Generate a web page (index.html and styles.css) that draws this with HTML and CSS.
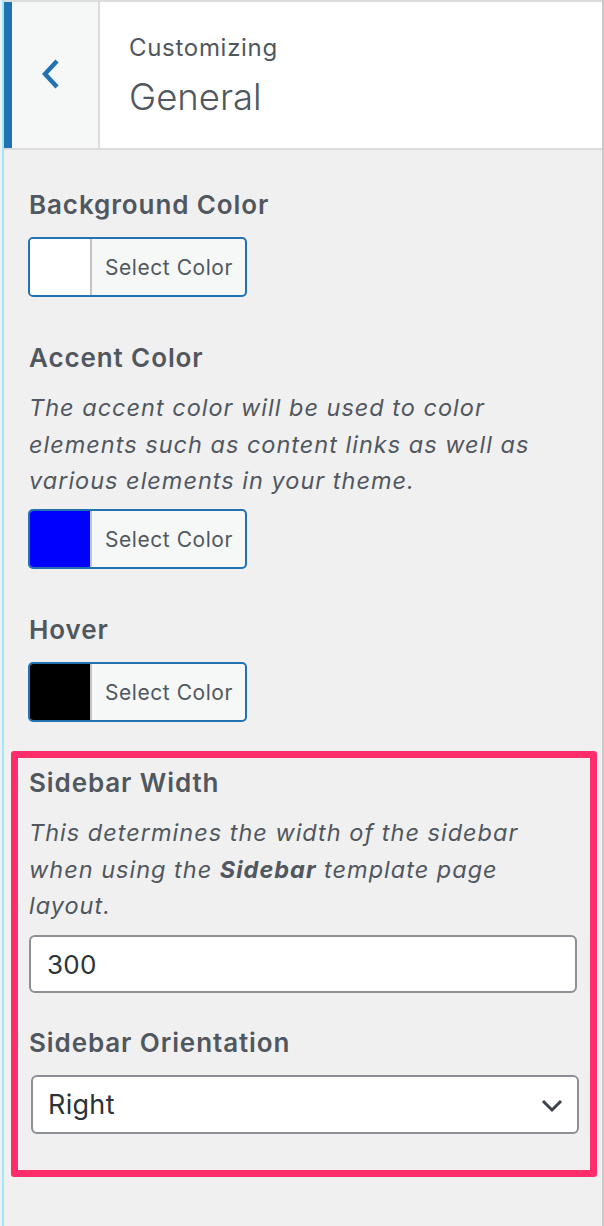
FILE: index.html
```html
<!DOCTYPE html>
<html lang="en">
<head>
<meta charset="utf-8">
<title>Customizing General</title>
<link rel="stylesheet" href="styles.css">
</head>
<body>
<div class="panel">
  <header class="section-header">
    <div class="accent-bar"></div>
    <button class="back-btn" aria-label="Back">
      <svg class="back-icon" width="20" height="32" viewBox="0 0 20 32"><polyline points="15,3 3,16 15,29" fill="none" stroke="#2271b1" stroke-width="4.4"/></svg>
    </button>
    <div class="section-title">
      <span class="crumb">Customizing</span>
      <h3 class="title">General</h3>
    </div>
  </header>

  <div class="controls">
    <div class="control">
      <span class="control-title">Background Color</span>
      <div class="color-btn"><span class="swatch swatch-white"></span><span class="color-label">Select Color</span></div>
    </div>

    <div class="control">
      <span class="control-title">Accent Color</span>
      <p class="desc">The accent color will be used to color elements such as content links as well as various elements in your theme.</p>
      <div class="color-btn"><span class="swatch swatch-blue"></span><span class="color-label">Select Color</span></div>
    </div>

    <div class="control">
      <span class="control-title">Hover</span>
      <div class="color-btn"><span class="swatch swatch-black"></span><span class="color-label">Select Color</span></div>
    </div>

    <div class="highlight">
      <div class="control">
        <span class="control-title">Sidebar Width</span>
        <p class="desc desc-tight">This determines the width of the sidebar when using the <b>Sidebar</b> template page layout.</p>
        <div class="text-input">300</div>
      </div>
      <div class="control control-orient">
        <span class="control-title">Sidebar Orientation</span>
        <div class="select">
          <span>Right</span>
          <svg class="select-icon" width="22" height="14" viewBox="0 0 22 14"><polyline points="2,2 11,11 20,2" fill="none" stroke="#3c434a" stroke-width="3"/></svg>
        </div>
      </div>
    </div>
  </div>
</div>
</body>
</html>
```

FILE: styles.css
```css
html, body {
  margin: 0;
  height: 100%;
}
body {
  background: #f0f0f1;
  padding-left: 2px;
  box-sizing: border-box;
  font-family: Inter, "Noto Sans", sans-serif;
  color: #50575e;
}
.panel {
  min-height: 100%;
  box-sizing: border-box;
  border-left: 2px solid #9ee9fa;
  border-right: 2px solid #c9c9cb;
  background: #f0f0f1;
}
.section-header {
  display: flex;
  height: 150px;
  box-sizing: border-box;
  border-top: 2px solid #dcdcde;
  border-bottom: 2px solid #dcdcde;
  background: #fff;
}
.accent-bar {
  width: 8px;
  background: #2271b1;
}
.back-btn {
  width: 88px;
  box-sizing: border-box;
  border: 0;
  border-right: 2px solid #dcdcde;
  background: #f6f7f7;
  padding: 0 0 0 30px;
  margin: 0;
  display: flex;
  align-items: center;
}
.back-icon {
  display: block;
  margin-top: -2px;
}
.section-title {
  padding: 30px 0 0 29px;
  display: flex;
  flex-direction: column;
}
.crumb {
  font-size: 24px;
  line-height: 32px;
  font-weight: 400;
  letter-spacing: 0.7px;
}
.title {
  margin: 8px 0 0 0;
  font-size: 36.5px;
  line-height: 50px;
  font-weight: 300;
  color: #50575e;
}
.controls {
  padding: 35px 25px 40px 25px;
}
.control {
  display: flex;
  flex-direction: column;
  align-items: flex-start;
  margin-bottom: 41px;
}
.control-title {
  font-size: 26px;
  line-height: 40px;
  font-weight: 600;
  letter-spacing: 0.9px;
  margin-bottom: 12px;
}
.desc {
  margin: 0 0 9.5px 0;
  font-size: 23.5px;
  line-height: 36.5px;
  font-style: italic;
  letter-spacing: 1px;
}
.desc-tight {
  margin-bottom: 10.5px;
}
.desc b {
  font-weight: 700;
}
.color-btn {
  display: flex;
  height: 60px;
  margin-left: -1px;
  box-sizing: border-box;
  border: 2px solid #2271b1;
  border-radius: 5px;
  overflow: hidden;
  background: #f6f7f7;
}
.swatch {
  width: 60px;
  border-right: 2px solid #c3c4c7;
}
.swatch-white { background: #fff; }
.swatch-blue { background: #0000ff; }
.swatch-black { background: #000; }
.color-label {
  display: flex;
  align-items: center;
  padding: 0 12px 0 13px;
  font-size: 21px;
  letter-spacing: 0.55px;
  color: #50575e;
}
.highlight {
  margin: -12px -20px 0 -18px;
  border: 7px solid #ff2d6c;
  border-radius: 3px;
  padding: 5px 13px 36px 11px;
}
.highlight .control {
  align-items: stretch;
  margin-bottom: 30px;
}
.highlight .control-orient {
  margin-bottom: 0;
}
.text-input {
  height: 58px;
  box-sizing: border-box;
  border: 2px solid #8c8f94;
  border-radius: 6px;
  background: #fff;
  padding: 0 16px;
  display: flex;
  align-items: center;
  font-size: 26px;
  letter-spacing: 0.3px;
  color: #2c3338;
}
.select {
  height: 59px;
  margin: 0 -2px 0 2px;
  box-sizing: border-box;
  border: 2px solid #8c8f94;
  border-radius: 6px;
  background: #fff;
  padding: 0 14px 0 15px;
  display: flex;
  align-items: center;
  justify-content: space-between;
  font-size: 27px;
  letter-spacing: 0.3px;
  color: #2c3338;
}
.select-icon {
  display: block;
  margin-top: 2px;
}
```
